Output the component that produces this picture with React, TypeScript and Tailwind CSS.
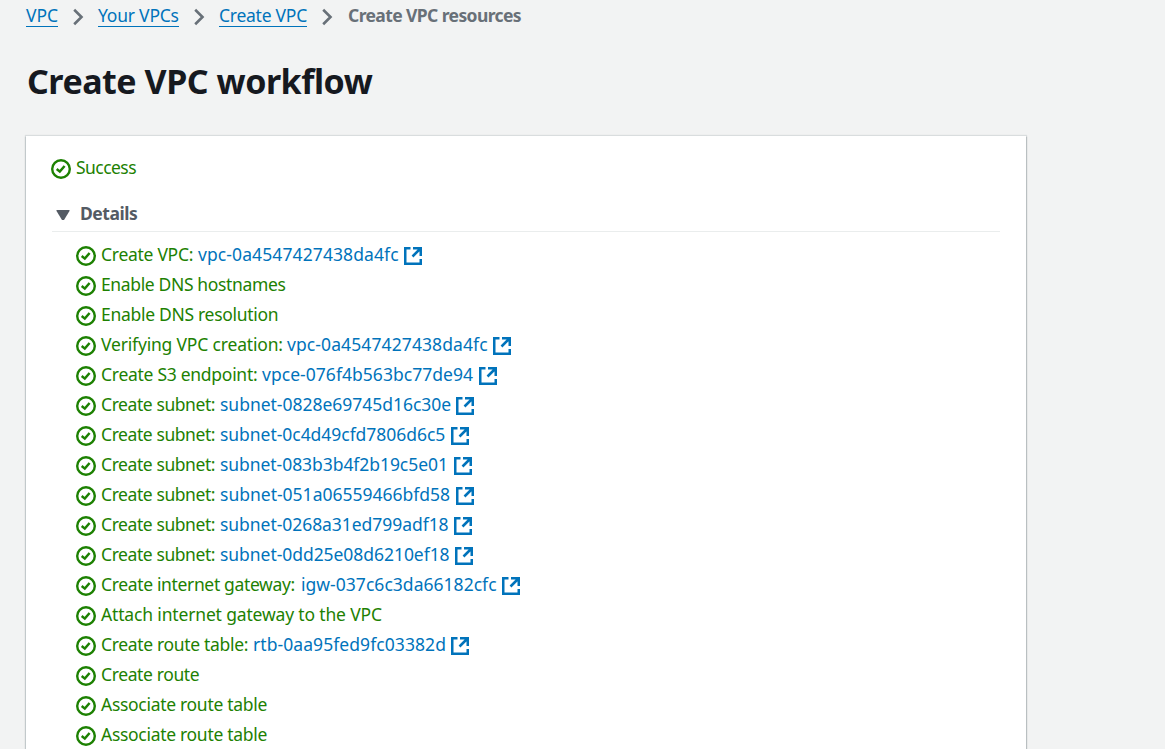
import { Fragment } from "react";

type Step = { label: string; link?: string; labelClass: string; linkClass?: string };

const steps: Step[] = [
  { label: "Create VPC:", link: "vpc-0a4547427438da4fc", labelClass: "w-[97px] tracking-[-0.28px]", linkClass: "w-[206px] tracking-[0.1px]" },
  { label: "Enable DNS hostnames", labelClass: "tracking-[-0.36px]" },
  { label: "Enable DNS resolution", labelClass: "tracking-[-0.3px]" },
  { label: "Verifying VPC creation:", link: "vpc-0a4547427438da4fc", labelClass: "w-[186px] tracking-[-0.18px]", linkClass: "w-[206px] tracking-[0.1px]" },
  { label: "Create S3 endpoint:", link: "vpce-076f4b563bc77de94", labelClass: "w-[161px] tracking-[-0.28px]", linkClass: "w-[217px] tracking-[0.04px]" },
  { label: "Create subnet:", link: "subnet-0828e69745d16c30e", labelClass: "w-[119px] tracking-[-0.42px]", linkClass: "w-[236px] tracking-[-0.02px]" },
  { label: "Create subnet:", link: "subnet-0c4d49cfd7806d6c5", labelClass: "w-[119px] tracking-[-0.42px]", linkClass: "w-[231px] tracking-[-0.04px]" },
  { label: "Create subnet:", link: "subnet-083b3b4f2b19c5e01", labelClass: "w-[119px] tracking-[-0.42px]", linkClass: "w-[234px] tracking-[-0.06px]" },
  { label: "Create subnet:", link: "subnet-051a06559466bfd58", labelClass: "w-[119px] tracking-[-0.42px]", linkClass: "w-[236px] tracking-[0px]" },
  { label: "Create subnet:", link: "subnet-0268a31ed799adf18", labelClass: "w-[119px] tracking-[-0.42px]", linkClass: "w-[234px] tracking-[-0.05px]" },
  { label: "Create subnet:", link: "subnet-0dd25e08d6210ef18", labelClass: "w-[119px] tracking-[-0.42px]", linkClass: "w-[235px] tracking-[-0.05px]" },
  { label: "Create internet gateway:", link: "igw-037c6c3da66182cfc", labelClass: "w-[200px] tracking-[-0.35px]", linkClass: "w-[201px] tracking-[0.03px]" },
  { label: "Attach internet gateway to the VPC", labelClass: "tracking-[-0.16px]" },
  { label: "Create route table:", link: "rtb-0aa95fed9fc03382d", labelClass: "w-[152px] tracking-[-0.33px]", linkClass: "w-[198px] tracking-[0.07px]" },
  { label: "Create route", labelClass: "tracking-[-0.38px]" },
  { label: "Associate route table", labelClass: "tracking-[-0.3px]" },
  { label: "Associate route table", labelClass: "tracking-[-0.3px]" },
];

const crumbs = [
  { text: "VPC", className: "w-8 tracking-[-0.05px]" },
  { text: "Your VPCs", className: "w-[81px] tracking-[-0.22px]" },
  { text: "Create VPC", className: "w-[88px] tracking-[-0.25px]" },
];

function CheckIcon() {
  return (
    <svg className="mt-px size-5 shrink-0" viewBox="0 0 20 20" fill="none" stroke="#1d8102">
      <circle cx="10" cy="10" r="8.8" strokeWidth="2.4" />
      <path d="M5.7 10 8.8 12.6 13.6 7" strokeWidth="2.5" />
    </svg>
  );
}

function ExternalIcon() {
  return (
    <svg className="mt-px h-[18px] w-[18px] shrink-0" viewBox="0 0 18 18" fill="none" stroke="#0073bb" strokeWidth="2.5">
      <path d="M6.5 1.25H1.25v15.5h15.5V12" />
      <path d="M9 1.25h7.75V9M16.5 1.5 8.5 9.5" />
    </svg>
  );
}

function Chevron() {
  return (
    <svg className="h-[18px] w-3 shrink-0" viewBox="0 0 12 18" fill="none" stroke="#687078" strokeWidth="2.6">
      <path d="M1.2 1.8 8.5 9l-7.3 7.2" />
    </svg>
  );
}

export default function App() {
  return (
    <div className="h-[749px] w-full overflow-hidden bg-[#f2f3f3] pl-[26px] font-['Noto_Sans',sans-serif] text-[17.5px] leading-[30px] whitespace-nowrap text-[#16191f]">
      <nav className="flex h-8 items-start">
        {crumbs.map((c) => (
          <Fragment key={c.text}>
            <a className={`h-[27px] shrink-0 border-b border-[#0073bb] text-[#0073bb] ${c.className}`}>{c.text}</a>
            <span className="flex h-[34px] w-10 shrink-0 items-center pl-[15px]"><Chevron /></span>
          </Fragment>
        ))}
        <span className="ml-px font-bold tracking-[-0.6px] text-[#687078]">Create VPC resources</span>
      </nav>
      <h1 className="mt-[25px] ml-px h-[79px] text-[34px] leading-[48px] font-bold tracking-[-0.48px]">Create VPC workflow</h1>
      <main className="h-[640px] w-[1000px] bg-white px-[25px] pt-[17px] shadow-[0_0_1px_1px_rgba(0,28,36,0.1),1px_1px_1px_0_rgba(0,28,36,0.15),-1px_1px_1px_0_rgba(0,28,36,0.1)]">
        <div className="flex h-[30px] items-center text-[#1d8102]">
          <CheckIcon />
          <span className="-mt-0.5 ml-[5px] tracking-[-0.55px]">Success</span>
        </div>
        <div className="mt-4 ml-px flex h-[33px] w-[948px] border-b border-[#eaeded] text-[#545b64]">
          <svg className="mt-[11px] ml-1 h-[10px] w-[14px]" viewBox="0 0 14 10" fill="#545b64">
            <path d="M.5 0h13v1L8 10H6L.5 1z" />
          </svg>
          <span className="-mt-px ml-[10px] font-bold tracking-[-0.48px]">Details</span>
        </div>
        <ul className="mt-2 pl-[25px]">
          {steps.map((s, i) => (
            <li key={i} className="flex h-[30px] items-center text-[#1d8102]">
              <CheckIcon />
              <span className={`-mt-0.5 ml-[5px] shrink-0 ${s.labelClass}`}>{s.label}</span>
              {s.link && (
                <a className="flex h-[30px] items-center text-[#0073bb]">
                  <span className={`-mt-0.5 shrink-0 ${s.linkClass}`}>{s.link}</span>
                  <ExternalIcon />
                </a>
              )}
            </li>
          ))}
        </ul>
      </main>
    </div>
  );
}
